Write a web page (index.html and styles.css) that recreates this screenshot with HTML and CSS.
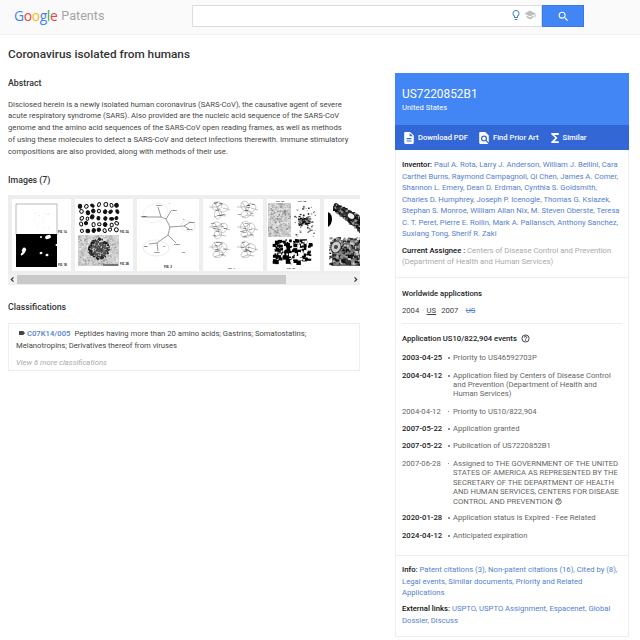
FILE: index.html
```html
<!DOCTYPE html>
<html lang="en">
<head>
<meta charset="utf-8">
<title>US7220852B1 - Coronavirus isolated from humans</title>
<link rel="stylesheet" href="styles.css">
</head>
<body>
<header class="topbar">
  <div class="logo"><span class="google"><span class="b">G</span><span class="r">o</span><span class="y">o</span><span class="b">g</span><span class="g">l</span><span class="r">e</span></span><span class="patents">Patents</span></div>
  <div class="search">
    <div class="field">
      <svg class="bulb" viewBox="0 0 24 24"><path fill="#4285c8" d="M9 21c0 .55.45 1 1 1h4c.55 0 1-.45 1-1v-1H9v1zm3-19C8.140 2 5 5.140 5 9c0 2.380 1.190 4.470 3 5.740V17c0 .55.45 1 1 1h6c.55 0 1-.45 1-1v-2.260c1.810-1.270 3-3.360 3-5.740 0-3.860-3.140-7-7-7zm2.850 11.100l-.85.6V16h-4v-2.300l-.85-.6A5 5 0 0 1 7 9a5 5 0 0 1 10 0c0 1.630-.8 3.160-2.150 4.100z"/></svg>
      <svg class="cap" viewBox="0 0 24 24"><path fill="#bdbdbd" d="M5 13.180v4L12 21l7-3.820v-4L12 17l-7-3.820zM12 3 1 9l11 6 9-4.910V17h2V9L12 3z"/></svg>
    </div>
    <div class="go"><svg viewBox="0 0 24 24"><path fill="#fff" d="M15.500 14h-.79l-.28-.27A6.470 6.470 0 0 0 16 9.500 6.500 6.500 0 1 0 9.500 16c1.610 0 3.090-.59 4.230-1.570l.27.28v.79l5 4.990L20.490 19l-4.990-5zm-6 0a4.500 4.500 0 1 1 0-9 4.500 4.500 0 0 1 0 9z"/></svg></div>
  </div>
</header>
<div class="page">
  <main class="main">
    <h1>Coronavirus isolated from humans</h1>
    <h2 class="h-abstract">Abstract</h2>
    <p class="abstract">Disclosed herein is a newly isolated human coronavirus (SARS-CoV), the causative agent of severe<br>acute respiratory syndrome (SARS). Also provided are the nucleic acid sequence of the SARS-CoV<br>genome and the amino acid sequences of the SARS-CoV open reading frames, as well as methods<br>of using these molecules to detect a SARS-CoV and detect infections therewith. Immune stimulatory<br>compositions are also provided, along with methods of their use.</p>
    <h2 class="h-images">Images (7)</h2>
    <div class="carousel">
      <div class="strip">
        <svg class="thumb" width="59" height="72" id="fig1"></svg>
        <svg class="thumb" width="58" height="72" id="fig2"></svg>
        <svg class="thumb" width="62" height="72" id="fig3"></svg>
        <svg class="thumb" width="60" height="72" id="fig4"></svg>
        <svg class="thumb" width="53" height="72" id="fig5"></svg>
        <svg class="thumb" width="60" height="72" id="fig6"></svg>
      </div>
      <div class="scrollbar">
        <svg viewBox="0 0 9 9"><path d="M5.500 2.300 3.300 4.500l2.200 2.200"/></svg>
        <div class="track"><div class="bar"></div></div>
        <svg viewBox="0 0 9 9"><path d="M3.500 2.300l2.200 2.200-2.200 2.200"/></svg>
      </div>
    </div>
    <h2 class="h-class">Classifications</h2>
    <div class="classes">
      <p><svg class="tag" viewBox="0 0 6 4"><path d="M.5 0h3.800L6 2 4.300 4H.5Q0 4 0 3.500v-3Q0 0 .5 0z"/></svg><a class="code">C07K14/005</a>Peptides having more than 20 amino acids; Gastrins; Somatostatins;<br>Melanotropins; Derivatives thereof from viruses</p>
      <p class="more">View 6 more classifications</p>
    </div>
  </main>
  <aside class="card">
    <div class="hero">
      <div class="number">US7220852B1</div>
      <div class="country">United States</div>
    </div>
    <nav class="actions">
      <span class="act pdf"><svg viewBox="4 2 16 20"><path d="M14 2H6c-1.100 0-2 .9-2 2v16c0 1.100.9 2 2 2h12c1.100 0 2-.9 2-2V8l-6-6zm2 16H8v-2h8v2zm0-4H8v-2h8v2zm-3-5V3.500L18.500 9H13z"/></svg>Download PDF</span>
      <span class="act art"><svg viewBox="4 2 16 20"><path d="M20 19.590V8l-6-6H6c-1.100 0-2 .9-2 2v16c0 1.100.9 2 2 2h12c.45 0 .85-.15 1.190-.4l-4.430-4.430c-.8.520-1.740.83-2.760.83a5 5 0 1 1 5-5c0 1.020-.31 1.960-.83 2.750L20 19.590zM9 13a3 3 0 1 0 6 0 3 3 0 0 0-6 0z"/></svg>Find Prior Art</span>
      <span class="act sim"><svg viewBox="6 4 12 16"><path d="M18 4H6v2l6.500 6L6 18v2h12v-3h-7l5-5-5-5h7z"/></svg>Similar</span>
    </nav>
    <section class="people">
      <p><b>Inventor:</b> <a>Paul A. Rota</a>, <a>Larry J. Anderson</a>, <a>William J. Bellini</a>, <a>Cara<br>Carthel Burns</a>, <a>Raymond Campagnoli</a>, <a>Qi Chen</a>, <a>James A. Comer</a>,<br><a>Shannon L. Emery</a>, <a>Dean D. Erdman</a>, <a>Cynthia S. Goldsmith</a>,<br><a>Charles D. Humphrey</a>, <a>Joseph P. Icenogle</a>, <a>Thomas G. Ksiazek</a>,<br><a>Stephan S. Monroe</a>, <a>William Allan Nix</a>, <a>M. Steven Oberste</a>, <a>Teresa<br>C. T. Peret</a>, <a>Pierre E. Rollin</a>, <a>Mark A. Pallansch</a>, <a>Anthony Sanchez</a>,<br><a>Suxiang Tong</a>, <a>Sherif R. Zaki</a></p>
      <p class="assignee"><b>Current Assignee :</b> Centers of Disease Control and Prevention<br>(Department of Health and Human Services)</p>
    </section>
    <section class="apps">
      <h3>Worldwide applications</h3>
      <div class="years"><span>2004 <i>·</i> <u>US</u></span><span>2007 <i>·</i> <a class="struck">US</a></span></div>
    </section>
    <section class="events">
      <h3>Application US10/822,904 events <svg class="help" viewBox="0 0 24 24"><circle cx="12" cy="12" r="9.500"/><path d="M8.700 9.500a3.300 3.300 0 1 1 5 2.700c-1.200.8-1.700 1.300-1.700 2.600M12 16.500v2"/></svg></h3>
      <ol>
        <li class="key"><time>2003-04-25</time><span>Priority to US46592703P</span></li>
        <li class="key filed"><time>2004-04-12</time><span>Application filed by Centers of Disease Control<br>and Prevention (Department of Health and<br>Human Services)</span></li>
        <li class="tight"><time>2004-04-12</time><span>Priority to US10/822,904</span></li>
        <li class="key"><time>2007-05-22</time><span>Application granted</span></li>
        <li class="key"><time>2007-05-22</time><span>Publication of US7220852B1</span></li>
        <li class="tight"><time>2007-06-28</time><span>Assigned to THE GOVERNMENT OF THE UNITED<br>STATES OF AMERICA AS REPRESENTED BY THE<br>SECRETARY OF THE DEPARTMENT OF HEALTH<br>AND HUMAN SERVICES, CENTERS FOR DISEASE<br>CONTROL AND PREVENTION <svg class="help small" viewBox="0 0 24 24"><circle cx="12" cy="12" r="9.500"/><path d="M8.700 9.500a3.300 3.300 0 1 1 5 2.700c-1.200.8-1.700 1.300-1.700 2.600M12 16.500v2"/></svg></span></li>
        <li class="key"><time>2020-01-28</time><span>Application status is Expired - Fee Related</span></li>
        <li class="key"><time>2024-04-12</time><span>Anticipated expiration</span></li>
      </ol>
    </section>
    <section class="links">
      <p><b>Info:</b> <a>Patent citations (3)</a>, <a>Non-patent citations (16)</a>, <a>Cited by (8)</a>,<br><a>Legal events</a>, <a>Similar documents</a>, <a>Priority and Related<br>Applications</a></p>
      <p><b>External links:</b> <a>USPTO</a>, <a>USPTO Assignment</a>, <a>Espacenet</a>, <a>Global<br>Dossier</a>, <a>Discuss</a></p>
    </section>
  </aside>
</div>
<script src="figures.js"></script>
</body>
</html>
```
FILE: styles.css
```css
* { box-sizing: border-box; }
body { margin: 0; width: 640px; height: 640px; overflow: hidden; background: #fff; color: #484848; font: 7.680px/11.9px Roboto, sans-serif; white-space: nowrap; }
h1, h2, h3, p, ol { margin: 0; padding: 0; }
h1, h2, h3 { font-weight: 500; }
svg { display: block; flex: none; }
a { color: #5581cf; }
.topbar { display: flex; height: 35px; padding: 5px 56px 0 14px; background: #fafafa; border-bottom: 1px solid #f1f1f1; }
.logo { display: flex; width: 178px; gap: 4px; line-height: 22px; }
.google { font: 500 13.900px/22px "Open Sans", sans-serif; letter-spacing: -.4px; }
.patents { font-size: 12.600px; color: #a5a5a5; }
.b { color: #4285f4; } .r { color: #ea4335; } .y { color: #fbbc05; } .g { color: #34a853; }
.search { display: flex; width: 392px; height: 23px; }
.field { display: flex; justify-content: flex-end; gap: 2px; width: 350px; height: 22px; padding: 3px 5px 0 0; background: #fff; border: 1px solid #ddd; }
.bulb, .cap { width: 12px; height: 12px; }
.go { display: flex; align-items: center; justify-content: center; width: 42px; height: 22px; background: #4285f4; border: 1px solid #3b78e0; }
.go svg { width: 13px; height: 13px; }
.page { display: flex; justify-content: space-between; padding: 0 11px 0 8px; }
.main { width: 352px; }
h1 { margin-top: 11px; font-size: 11.800px; line-height: 16px; color: #333; }
h2 { font-size: 8.800px; line-height: 12px; color: #333; }
.h-abstract { margin-top: 15px; }
.abstract { margin-top: 9.500px; }
.h-images { margin-top: 16px; }
.carousel { margin-top: 9px; width: 352px; height: 90px; background: #eee; }
.strip { display: flex; gap: 4px; height: 79px; padding: 4px 0 0 4px; overflow: hidden; }
.thumb { background: #fff; }
.scrollbar { display: flex; align-items: center; height: 10px; background: #f1f1f1; }
.scrollbar svg { width: 9px; height: 9px; fill: none; stroke: #333; stroke-width: 1.200; }
.track { flex: 1; height: 9px; }
.bar { width: 269px; height: 9px; background: #c9c9c9; }
.h-class { margin-top: 16px; }
.classes { margin-top: 10px; width: 352px; height: 48px; padding: 4px 7px; border: 1px solid #eee; }
.tag { display: inline-block; width: 6px; height: 4px; margin: 0 2px 1px 3px; fill: #444; }
.code { margin-right: 4px; font-weight: 500; }
.more { margin-top: 5px; color: #aaa; font-style: italic; }
.card { width: 234px; height: 564px; margin-top: 38px; border: 1px solid #eee; border-top: 0; color: #777; }
.hero { height: 52px; margin: 0 -1px; padding: 14px 7px 0; background: #4285f4; color: #fff; }
.number { font-size: 11.900px; line-height: 15px; }
.country { font-size: 7.600px; line-height: 12px; }
.actions { display: flex; align-items: center; height: 25px; margin: 0 -1px; padding: 0 9px; background: #3367d6; color: #fff; font-weight: 500; font-size: 7.650px; }
.act { display: flex; align-items: center; gap: 4px; }
.act svg { width: 10px; height: 12px; fill: #fff; }
.art { margin-left: 11px; }
.sim { margin-left: 12px; }
.act.sim svg { width: 8px; height: 10px; }
b { font-weight: 500; color: #111; }
.people { height: 128px; padding: 9px 6px 0; border-bottom: 1px solid #eee; line-height: 11.500px; }
.assignee { margin-top: 5px; color: #aaa; }
.apps { height: 46px; margin: 0 6px; padding-top: 10px; border-bottom: 1px solid #eee; }
h3 { font-size: 7.700px; line-height: 11px; color: #222; }
.years { display: flex; gap: 5px; margin-top: 6px; color: #444; }
.years i { margin: 0 .8px; color: #aaa; }
.struck { text-decoration: line-through; }
.events { height: 231px; padding: 9px 6px 0; }
.help { display: inline-block; width: 9px; height: 9px; margin-left: 2px; vertical-align: -2px; fill: none; stroke: #333; stroke-width: 2.400; }
.help.small { width: 7px; height: 7px; margin: 0; vertical-align: -1px; }
ol { list-style: none; margin-top: 9px; line-height: 9.400px; }
li { display: grid; grid-template-columns: 45.500px 5.500px 1fr; margin-bottom: 8.200px; color: #666; }
li.tight { margin-bottom: 7.300px; }
li::before { content: ""; order: 1; width: 1px; height: 1px; margin-top: 4px; background: #999; }
li time { order: 0; }
li span { order: 2; }
li.key::before { width: 2px; height: 2px; border-radius: 1px; background: #4272b8; }
li.key time { color: #222; font-weight: 500; }
.links { padding: 8px 6px 0; border-top: 1px solid #eee; line-height: 11.500px; }
.links p + p { margin-top: 4.500px; }
```
FILE: figures.js
```js
var NS = 'http://www.w3.org/2000/svg';
var seed = 7;
function rnd() { seed = (seed * 16807) % 2147483647; return seed / 2147483647; }
function el(fig, tag, attrs, text) {
  var e = document.createElementNS(NS, tag);
  for (var k in attrs) e.setAttribute(k, attrs[k]);
  if (text) e.textContent = text;
  document.getElementById(fig).appendChild(e);
}
function label(fig, x, y, text, size) {
  el(fig, 'text', { x: x, y: y, 'font-size': size || 3, 'font-weight': 700, fill: '#222' }, text);
}
function rect(fig, x, y, w, h, fill, stroke) {
  el(fig, 'rect', { x: x, y: y, width: w, height: h, fill: fill, stroke: stroke || 'none', 'stroke-width': .5 });
}
function blob(fig, x, y, rx, ry, fill, stroke, sw) {
  el(fig, 'ellipse', { cx: x, cy: y, rx: rx, ry: ry, fill: fill, stroke: stroke || 'none', 'stroke-width': sw || 0, transform: 'rotate(' + Math.round(rnd() * 180) + ' ' + x + ' ' + y + ')' });
}
function speckle(fig, x, y, w, h, n, size, colors) {
  for (var i = 0; i < n; i++) {
    var s = size * (.5 + rnd());
    rect(fig, x + rnd() * (w - s), y + rnd() * (h - s), s, s * (.6 + rnd() * .5), colors[Math.floor(rnd() * colors.length)]);
  }
}
/* Fig 1: light field over dark field */
rect('fig1', 4, 5, 41, 31, '#fff', '#777');
speckle('fig1', 19, 13, 20, 18, 22, .6, ['#ccc', '#ddd']);
rect('fig1', 4, 35, 41, 33, '#000');
[[12, 51, 2.500, 2], [11, 54, 1.200, 3], [36, 38, 3, 2], [29, 38, 1, 1], [29, 54, 1.200, 1.500], [35, 56, 1.500, 1.200], [44.500, 46, 1, 1]].forEach(function (p) { blob('fig1', p[0], p[1], p[2], p[3], '#fff'); });
label('fig1', 46, 34, 'FIG. 1A', 2.700); label('fig1', 46, 67, 'FIG. 1B', 2.700);
/* Fig 2: cell rings over a virion */
for (var r = 0; r < 5; r++) for (var c = 0; c < 7; c++) {
  var ring = rnd() > .6;
  blob('fig2', 5 + c * 6 + rnd() * 2, 5.500 + r * 6.200 + rnd() * 2, 1.300 + rnd() * .7, 1.500 + rnd() * .6, ring ? '#fff' : '#111', '#111', 1);
}
rect('fig2', 3, 36, 41, 31, '#d0d0d0');
speckle('fig2', 3, 36, 41, 31, 450, 1.300, ['#aaa', '#ddd', '#bbb', '#eee', '#999']);
for (var i = 0; i < 260; i++) {
  var a = rnd() * 6.283, d = Math.sqrt(rnd()) * 10.500;
  blob('fig2', 24 + Math.cos(a) * d, 50 + Math.sin(a) * d, .9, .7, d > 7.500 ? '#222' : '#4a4a4a');
}
rect('fig2', 28, 65.500, 15, 1, '#222');
label('fig2', 45, 34, 'FIG. 2A', 2.700); label('fig2', 45, 66, 'FIG. 2B', 2.700);
/* Fig 3: unrooted tree */
el('fig3', 'path', { d: 'M33 28 29 20 34 12M29 20 24 18 21 8M24 18 5 18M33 28 47 27 52 24M47 27 52 30M33 28 31 36 20 44 12 45M20 44 21 52M31 36 39 44', fill: 'none', stroke: '#555', 'stroke-width': .6 });
blob('fig3', 18, 14, 13, 9, 'none', '#ddd', .4); blob('fig3', 19, 49, 13, 8, 'none', '#ccc', .4); blob('fig3', 51, 27, 7, 5, 'none', '#ccc', .4);
[[19, 7, 'HCoV'], [4, 18, 'PEDV'], [34, 12, 'TGEV'], [52, 24, 'BCoV'], [50, 31, 'MHV'], [7, 48, 'IBV'], [17, 54, 'TCoV'], [37, 46, 'SARS'], [45, 54, 'G3'], [32, 5, 'I'], [46, 21, 'II'], [26, 48, 'III']].forEach(function (p) { label('fig3', p[0], p[1], p[2], 2.300); });
label('fig3', 27, 69, 'FIG. 3');
/* Fig 4: six grouped trees */
for (r = 0; r < 3; r++) for (c = 0; c < 2; c++) {
  var x = 16 + c * 28, y = 8 + r * 20;
  blob('fig4', x - 2, y - 1, 5, 4, 'none', '#888', .4);
  blob('fig4', x + 4, y + 1, 4, 5, 'none', '#888', .4);
  blob('fig4', x - 1, y + 7, 5, 3.500, 'none', '#888', .4);
  el('fig4', 'path', { d: 'M' + (x - 10) + ' ' + y + 'l8 0 6-4m-6 4 3 8-6 2m6-2 6 1m-9-9-3-5m9 6 7 2', fill: 'none', stroke: '#666', 'stroke-width': .4 });
  for (i = 0; i < 7; i++) label('fig4', x - 10 + rnd() * 15, y - 4 + rnd() * 14, 'CoV', 1.600);
}
label('fig4', 25, 70, 'FIG. 4', 2.500);
/* Fig 5: micrographs */
rect('fig5', 1, 4, 23, 34, '#ccc');
speckle('fig5', 1, 4, 23, 34, 330, 1.300, ['#888', '#eee', '#aaa', '#ddd']);
speckle('fig5', 26, 5, 23, 33, 65, 1.300, ['#222', '#777']);
speckle('fig5', 31, 18, 13, 9, 80, 1.800, ['#111', '#333', '#888']);
speckle('fig5', 5, 40, 41, 26, 95, 3.200, ['#000']);
speckle('fig5', 5, 40, 41, 26, 35, 2, ['#fff']);
label('fig5', 9, 3, 'FIG. 5A', 2.500); label('fig5', 31, 3, 'FIG. 5B', 2.500); label('fig5', 20, 70, 'FIG. 5C', 2.500);
/* Fig 6: stained tissue */
el('fig6', 'path', { d: 'M4 13q4 2 4 7t-4 8z', fill: '#000' });
for (i = 0; i < 330; i++) {
  var t = rnd(), px = 9 + t * 27, py = 3 + t * 14 + rnd() * (7 + t * 8);
  rect('fig6', px, py, 1 + rnd() * 2, 1 + rnd() * 2, ['#111', '#333', '#999', '#111'][Math.floor(rnd() * 4)]);
}
blob('fig6', 27, 17, 3, 4, '#eee', '#222', 1);
rect('fig6', 8, 41, 32, 26, '#777');
speckle('fig6', 5, 38, 36, 29, 330, 2.300, ['#111', '#333', '#888', '#ccc']);
blob('fig6', 12, 48, 5, 6, '#ccc', '#333', 1); blob('fig6', 12, 48, 2, 2, '#444');
```
